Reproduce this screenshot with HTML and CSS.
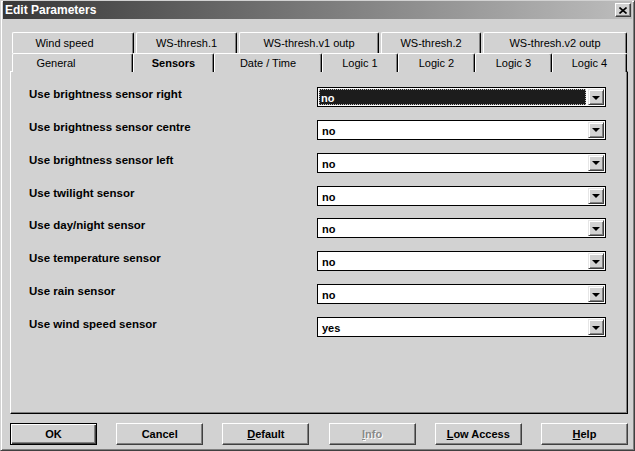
FILE: index.html
```html
<!DOCTYPE html>
<html lang="en">
<head>
<meta charset="UTF-8" />
<title>Edit Parameters</title>
<link rel="stylesheet" href="styles.css">
</head>
<body>
  <div class="window">
    <div class="titlebar">
      <span class="title">Edit Parameters</span>
      <span class="close">
        <svg width="8" height="7" viewBox="0 0 8 7"><path d="M0.5 0.5 L7.5 6.5 M7.5 0.5 L0.5 6.5" stroke="#000" stroke-width="1.6" fill="none"/></svg>
      </span>
    </div>
    <div class="client">
      <div class="tabs">
        <div class="tab-row back">
          <div class="tab">Wind speed</div>
          <div class="tab">WS-thresh.1</div>
          <div class="tab">WS-thresh.v1 outp</div>
          <div class="tab">WS-thresh.2</div>
          <div class="tab">WS-thresh.v2 outp</div>
        </div>
        <div class="tab-row front">
          <div class="tab">General</div>
          <div class="tab selected">Sensors</div>
          <div class="tab">Date / Time</div>
          <div class="tab">Logic 1</div>
          <div class="tab">Logic 2</div>
          <div class="tab">Logic 3</div>
          <div class="tab">Logic 4</div>
        </div>
      </div>
      <div class="panel">
        <div class="params">
          <div class="label">Use brightness sensor right</div>
          <div class="combo focused"><span class="value">no</span><span class="drop"><i></i></span></div>
          <div class="label">Use brightness sensor centre</div>
          <div class="combo"><span class="value">no</span><span class="drop"><i></i></span></div>
          <div class="label">Use brightness sensor left</div>
          <div class="combo"><span class="value">no</span><span class="drop"><i></i></span></div>
          <div class="label">Use twilight sensor</div>
          <div class="combo"><span class="value">no</span><span class="drop"><i></i></span></div>
          <div class="label">Use day/night sensor</div>
          <div class="combo"><span class="value">no</span><span class="drop"><i></i></span></div>
          <div class="label">Use temperature sensor</div>
          <div class="combo"><span class="value">no</span><span class="drop"><i></i></span></div>
          <div class="label">Use rain sensor</div>
          <div class="combo"><span class="value">no</span><span class="drop"><i></i></span></div>
          <div class="label">Use wind speed sensor</div>
          <div class="combo"><span class="value">yes</span><span class="drop"><i></i></span></div>
        </div>
      </div>
      <div class="buttons">
        <button class="btn default">OK</button>
        <button class="btn">Cancel</button>
        <button class="btn"><u>D</u>efault</button>
        <button class="btn disabled"><u>I</u>nfo</button>
        <button class="btn"><u>L</u>ow Access</button>
        <button class="btn"><u>H</u>elp</button>
      </div>
    </div>
  </div>
</body>
</html>
```
FILE: styles.css
```css
body {
  margin: 0;
  background: #d2d2d2;
  font-family: "Liberation Sans", Arial, sans-serif;
  font-size: 11px;
  color: #000;
}
.window {
  width: 635px;
  height: 451px;
  box-sizing: border-box;
  background: #d2d2d2;
  border: 1px solid;
  border-color: #d2d2d2 #404040 #404040 #d2d2d2;
  box-shadow: inset 1px 1px #fff, inset -1px -1px #808080;
  padding: 0 2px 2px 2px;
}
.titlebar {
  height: 18px;
  display: flex;
  align-items: center;
  justify-content: space-between;
  background: linear-gradient(to right, #383838, #bdbdbd);
}
.title {
  color: #fff;
  font-weight: bold;
  font-size: 12px;
  padding-left: 2px;
}
.close {
  width: 14px;
  height: 12px;
  margin-right: 1px;
  display: flex;
  align-items: center;
  justify-content: center;
  background: #d2d2d2;
  border: 1px solid;
  border-color: #fff #404040 #404040 #fff;
  box-shadow: inset -1px -1px #808080;
}
.client {
  padding: 0 4px 0 7px;
}
.tabs {
  margin: 13px 0 0 2px;
  width: 615px;
}
.tab-row {
  display: grid;
}
.tab-row.back {
  grid-template-columns: 122px 101px 140px 100px 144px;
  column-gap: 2px;
  height: 21px;
}
.tab-row.front {
  grid-template-columns: 121px 81px 108px 76px 77px 77px 75px;
  height: 18px;
}
.tab {
  display: flex;
  align-items: center;
  justify-content: center;
  box-sizing: border-box;
  border-top: 1px solid #fff;
  border-left: 1px solid #fff;
  border-right: 1px solid #000;
  border-radius: 2px 2px 0 0;
  box-shadow: inset -1px 0 #808080;
  background: #d2d2d2;
}
.tab-row.back .tab {
  padding-bottom: 1px;
}
.tab-row.back .tab:first-child {
  padding-right: 17px;
}
.tab-row.front .tab:first-child {
  padding-right: 33px;
}
.tab.selected {
  font-weight: bold;
  position: relative;
  z-index: 1;
  height: 19px;
}
.panel {
  height: 343px;
  box-sizing: border-box;
  border: 1px solid;
  border-color: #fff #000 #000 #fff;
  box-shadow: inset -1px -1px #808080;
  padding: 15px 0 0 18px;
}
.params {
  display: grid;
  grid-template-columns: 288px 289px;
  grid-auto-rows: 20px;
  row-gap: 12.86px;
}
.label {
  font-weight: bold;
  font-size: 11.5px;
  line-height: 13px;
  margin-top: 1px;
}
.combo {
  display: flex;
  box-sizing: border-box;
  height: 20px;
  border: 1px solid #000;
  padding: 1px;
  background: #fff;
}
.value {
  flex: 1;
  margin-right: 2px;
  padding-left: 2px;
  font-weight: bold;
  line-height: 16px;
  border: 1px solid transparent;
  box-sizing: border-box;
}
.combo.focused .value {
  background: #1c1c1c;
  color: #fff;
  border: 1px dotted #bdbdbd;
  padding-left: 1px;
}
.drop {
  width: 16px;
  height: 16px;
  box-sizing: border-box;
  display: flex;
  align-items: center;
  justify-content: center;
  background: #d2d2d2;
  border: 1px solid;
  border-color: #e6e6e6 #404040 #404040 #e6e6e6;
  box-shadow: inset 1px 1px #fff, inset -1px -1px #808080;
}
.drop i {
  width: 0;
  height: 0;
  border-left: 4px solid transparent;
  border-right: 4px solid transparent;
  border-top: 4px solid #000;
  margin-top: 1px;
}
.buttons {
  display: flex;
  justify-content: space-between;
  margin-top: 9px;
}
.btn {
  width: 87px;
  height: 22px;
  box-sizing: border-box;
  background: #d2d2d2;
  border: 1px solid;
  border-color: #fff #404040 #404040 #fff;
  box-shadow: inset -1px -1px #808080;
  font-family: "Liberation Sans", Arial, sans-serif;
  font-size: 11px;
  font-weight: bold;
  color: #000;
  padding: 0;
}
.btn.default {
  border: 1px solid #000;
  box-shadow: inset 1px 1px #fff, inset -1px -1px #404040, inset -2px -2px #808080;
}
.btn.disabled {
  color: #8a8a8a;
  text-shadow: 1px 1px #fff;
}
```
